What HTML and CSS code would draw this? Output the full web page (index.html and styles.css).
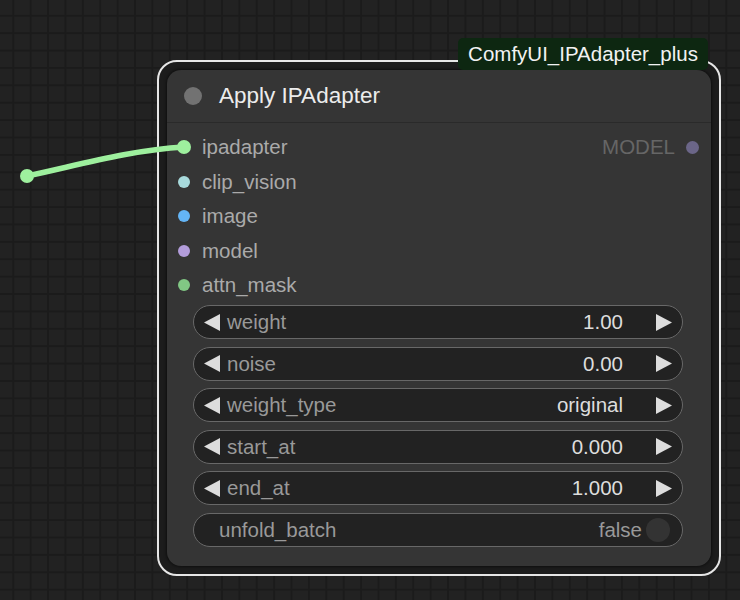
FILE: index.html
```html
<!DOCTYPE html>
<html>
<head>
<meta charset="utf-8">
<link rel="stylesheet" href="styles.css">
</head>
<body>
<div class="canvas">
  <svg class="wire" width="740" height="600" viewBox="0 0 740 600">
    <path d="M27 176 C 75 166, 130 150, 184 147" fill="none" stroke="#9ef09e" stroke-width="5.5" stroke-linecap="round"/>
    <circle cx="27" cy="176" r="7" fill="#9ef09e"/>
  </svg>

  <div class="node">
    <div class="body">
      <div class="title">
        <span class="title-dot"></span>
        <span class="title-text">Apply IPAdapter</span>
      </div>
      <div class="inputs">
        <div class="slot">
          <span class="dot dot-ipadapter"></span><span class="slot-name">ipadapter</span>
          <span class="output"><span class="out-name">MODEL</span><span class="dot dot-model-out"></span></span>
        </div>
        <div class="slot"><span class="dot dot-clip"></span><span class="slot-name">clip_vision</span></div>
        <div class="slot"><span class="dot dot-image"></span><span class="slot-name">image</span></div>
        <div class="slot"><span class="dot dot-model"></span><span class="slot-name">model</span></div>
        <div class="slot"><span class="dot dot-mask"></span><span class="slot-name">attn_mask</span></div>
      </div>
      <div class="widgets">
        <div class="widget">
          <svg class="arrow" width="16" height="17" viewBox="0 0 16 17"><polygon points="0,8.5 16,0 16,17" fill="#ddd"/></svg>
          <span class="w-label">weight</span><span class="w-value">1.00</span>
          <svg class="arrow" width="16" height="17" viewBox="0 0 16 17"><polygon points="16,8.5 0,0 0,17" fill="#ddd"/></svg>
        </div>
        <div class="widget">
          <svg class="arrow" width="16" height="17" viewBox="0 0 16 17"><polygon points="0,8.5 16,0 16,17" fill="#ddd"/></svg>
          <span class="w-label">noise</span><span class="w-value">0.00</span>
          <svg class="arrow" width="16" height="17" viewBox="0 0 16 17"><polygon points="16,8.5 0,0 0,17" fill="#ddd"/></svg>
        </div>
        <div class="widget">
          <svg class="arrow" width="16" height="17" viewBox="0 0 16 17"><polygon points="0,8.5 16,0 16,17" fill="#ddd"/></svg>
          <span class="w-label">weight_type</span><span class="w-value">original</span>
          <svg class="arrow" width="16" height="17" viewBox="0 0 16 17"><polygon points="16,8.5 0,0 0,17" fill="#ddd"/></svg>
        </div>
        <div class="widget">
          <svg class="arrow" width="16" height="17" viewBox="0 0 16 17"><polygon points="0,8.5 16,0 16,17" fill="#ddd"/></svg>
          <span class="w-label">start_at</span><span class="w-value">0.000</span>
          <svg class="arrow" width="16" height="17" viewBox="0 0 16 17"><polygon points="16,8.5 0,0 0,17" fill="#ddd"/></svg>
        </div>
        <div class="widget">
          <svg class="arrow" width="16" height="17" viewBox="0 0 16 17"><polygon points="0,8.5 16,0 16,17" fill="#ddd"/></svg>
          <span class="w-label">end_at</span><span class="w-value">1.000</span>
          <svg class="arrow" width="16" height="17" viewBox="0 0 16 17"><polygon points="16,8.5 0,0 0,17" fill="#ddd"/></svg>
        </div>
        <div class="widget toggle-widget">
          <span class="w-label">unfold_batch</span><span class="t-value">false</span><span class="toggle"></span>
        </div>
      </div>
    </div>
  </div>

  <div class="badge">ComfyUI_IPAdapter_plus</div>
</div>
</body>
</html>
```
FILE: styles.css
```css
html, body {
  margin: 0;
  padding: 0;
}
body {
  width: 740px;
  height: 600px;
  overflow: hidden;
  font-family: "Liberation Sans", Arial, sans-serif;
  background-color: #222222;
  background-image:
    linear-gradient(to right, #1b1b1b 0, #1b1b1b 2px, transparent 2px),
    linear-gradient(to bottom, #1b1b1b 0, #1b1b1b 2px, transparent 2px);
  background-size: 17.4px 17.4px;
  background-position: 12.3px 14.8px;
}
.canvas {
  position: relative;
  width: 740px;
  height: 600px;
}
.wire {
  position: absolute;
  left: 0;
  top: 0;
  z-index: 2;
  pointer-events: none;
}
.node {
  position: absolute;
  left: 157px;
  top: 60px;
  width: 544px;
  height: 496px;
  padding: 8px;
  border: 2px solid #e6e6e6;
  border-radius: 20px;
  background: #1c1c1c;
}
.body {
  height: 100%;
  background: #353535;
  border-radius: 14px;
  box-shadow: 0 0 3px 1px rgba(0,0,0,0.5);
}
.title {
  height: 52px;
  border-bottom: 1px solid #2a2a2a;
  display: flex;
  align-items: center;
  padding-left: 17px;
  gap: 17px;
}
.title-dot {
  width: 18px;
  height: 18px;
  border-radius: 50%;
  background: #727272;
}
.title-text {
  font-size: 22.5px;
  color: #ececec;
}
.inputs {
  padding-top: 7px;
}
.slot {
  height: 34.5px;
  display: flex;
  align-items: center;
  padding-left: 11px;
}
.dot {
  width: 12px;
  height: 12px;
  border-radius: 50%;
  flex: none;
}
.slot-name {
  margin-left: 12px;
  font-size: 20.5px;
  color: #aaaaaa;
}
.dot-ipadapter { background: #9ef09e; width: 14px; height: 14px; margin-left: -1px; margin-right: -1px; }
.dot-clip { background: #a8dadc; }
.dot-image { background: #64b5f6; }
.dot-model { background: #b39ddb; }
.dot-mask { background: #81c784; }
.output {
  margin-left: auto;
  margin-right: 12px;
  display: flex;
  align-items: center;
}
.out-name {
  font-size: 20.5px;
  color: #666666;
  margin-right: 11px;
}
.dot-model-out {
  background: #6b6688;
  width: 13px;
  height: 13px;
}
.widgets {
  margin-top: 2.5px;
  margin-left: 26px;
  width: 490px;
  display: flex;
  flex-direction: column;
  gap: 7.5px;
}
.widget {
  box-sizing: border-box;
  height: 34px;
  border: 1.5px solid #686868;
  border-radius: 17px;
  background: #222222;
  display: flex;
  align-items: center;
  padding: 0 10px;
  font-size: 20.5px;
}
.arrow {
  flex: none;
}
.w-label {
  margin-left: 7px;
  color: #999999;
}
.w-value {
  margin-left: auto;
  margin-right: 33px;
  color: #dddddd;
}
.toggle-widget {
  padding-left: 25px;
  padding-right: 12px;
}
.toggle-widget .w-label {
  margin-left: 0;
}
.t-value {
  margin-left: auto;
  margin-right: 4px;
  color: #999999;
}
.toggle {
  width: 24px;
  height: 24px;
  border-radius: 50%;
  background: #333333;
}
.badge {
  position: absolute;
  left: 458px;
  top: 38px;
  width: 250px;
  height: 32px;
  box-sizing: border-box;
  background: #0d2711;
  border-radius: 5px;
  color: #f2f2f2;
  font-size: 20.5px;
  display: flex;
  align-items: center;
  justify-content: center;
  z-index: 3;
}
```
